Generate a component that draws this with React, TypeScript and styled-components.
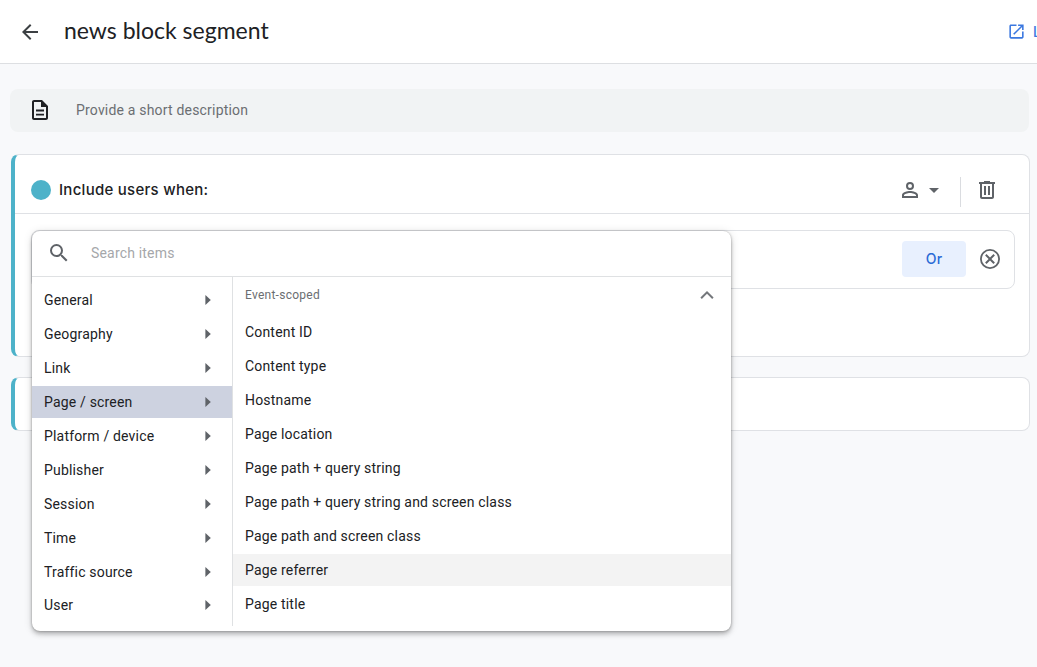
import React from "react";
import styled, { createGlobalStyle } from "styled-components";

const GlobalStyle = createGlobalStyle`
  * { box-sizing: border-box; }
  html, body { margin: 0; height: 100%; overflow: hidden; }
  body {
    background: #f8f9fb;
    color: #202124;
    font-family: Roboto, "Liberation Sans", sans-serif;
  }
`;

const Page = styled.div`
  position: relative;
  width: 1037px;
  height: 667px;
  overflow: hidden;
`;

const Header = styled.header`
  display: flex;
  align-items: center;
  height: 64px;
  padding: 0 0 0 18px;
  background: #fff;
  border-bottom: 1px solid #dddfe2;
`;

const Title = styled.h1`
  margin: 0 0 3px 22px;
  flex: 1;
  font: 400 23px/30px Lato, sans-serif;
  white-space: nowrap;
`;

const HeaderLink = styled.a`
  display: flex;
  align-items: center;
  gap: 7px;
  width: 30px;
  overflow: hidden;
  color: #3b78e0;
  font: 500 14px/20px Inter, sans-serif;
  white-space: nowrap;
  svg { flex: none; }
`;

const Content = styled.main`
  display: flex;
  flex-direction: column;
  padding: 25px 7px 0 11px;
`;

const Description = styled.div`
  display: flex;
  align-items: center;
  height: 43px;
  margin: 0 1px 22px -1px;
  padding: 0 0 1px 18px;
  gap: 24px;
  border-radius: 8px;
  background: #f1f3f4;
  color: #6b6e72;
  font-size: 14px;
  letter-spacing: 0.19px;
`;

const Card = styled.section<{ $height: number }>`
  height: ${(p) => p.$height}px;
  margin-bottom: 20px;
  border: 1px solid #dfe1e5;
  border-left: 4px solid #4db2c9;
  border-radius: 8px;
  background: #fff;
`;

const CardHeader = styled.div`
  display: flex;
  align-items: center;
  height: 59px;
  padding: 11px 30px 0 16px;
  border-bottom: 1px solid #dfe1e5;
`;

const Dot = styled.span`
  width: 20px;
  height: 20px;
  border-radius: 50%;
  background: #4db2c9;
`;

const CardTitle = styled.h2`
  flex: 1;
  margin: 0 0 0 8px;
  font: 500 15px/24px Inter, sans-serif;
  letter-spacing: 0.27px;
`;

const Divider = styled.span`
  width: 1px;
  height: 30px;
  margin: 4px 14px 0 14px;
  background: #dadce0;
`;

const Condition = styled.div`
  display: flex;
  align-items: center;
  justify-content: flex-end;
  height: 59px;
  margin: 16px 14px 0 16px;
  padding: 0 12px 1px 0;
  gap: 12px;
  border: 1px solid #dfe1e5;
  border-radius: 8px;
`;

const OrButton = styled.button`
  width: 64px;
  height: 36px;
  padding: 0;
  border: 0;
  border-radius: 4px;
  background: #e8f0fe;
  color: #2b6bd6;
  font: 500 14px/36px Inter, sans-serif;
  letter-spacing: 0.3px;
`;

const Picker = styled.div`
  position: absolute;
  left: 32px;
  top: 231px;
  width: 699px;
  height: 400px;
  display: flex;
  flex-direction: column;
  overflow: hidden;
  border-radius: 8px;
  background: #fff;
  box-shadow: 0 2px 4px -1px rgba(0, 0, 0, 0.22), 0 4px 5px rgba(0, 0, 0, 0.13),
    0 1px 10px rgba(0, 0, 0, 0.12), 0 0 2px rgba(0, 0, 0, 0.25);
`;

const Search = styled.div`
  display: flex;
  align-items: center;
  height: 46px;
  padding: 0 0 1px 15px;
  gap: 20px;
  border-bottom: 1px solid #dfe1e3;
  color: #a5a7aa;
  font-size: 14px;
  letter-spacing: 0.18px;
`;

const Columns = styled.div`
  display: flex;
  height: 349px;
`;

const Categories = styled.nav`
  width: 201px;
  padding-top: 7px;
  border-right: 1px solid #dfe1e3;
`;

const Items = styled.div`
  flex: 1;
`;

const Group = styled.div`
  display: flex;
  align-items: center;
  justify-content: space-between;
  height: 39px;
  padding: 0 12px 4px;
  color: #6b6e72;
  font-size: 12px;
  letter-spacing: 0.26px;
`;

const Row = styled.div<{ $bg?: string }>`
  display: flex;
  align-items: center;
  justify-content: space-between;
  height: 32px;
  margin-bottom: 1.94px;
  padding: 0 12px;
  background: ${(p) => p.$bg ?? "transparent"};
  font-size: 14px;
  letter-spacing: 0.18px;
  white-space: nowrap;
`;

const Icon = ({ d, size = 24, color = "#5f6368" }: { d: string; size?: number; color?: string }) => (
  <svg width={size} height={size} viewBox="0 0 24 24" fill={color}>
    <path d={d} fillRule="evenodd" />
  </svg>
);

const icons = {
  back: "M20 11H7.83l5.59-5.59L12 4l-8 8 8 8 1.41-1.41L7.83 13H20v-2z",
  launch: "M19 19H5V5h7V3H5c-1.11 0-2 .9-2 2v14c0 1.1.89 2 2 2h14c1.1 0 2-.9 2-2v-7h-2v7zM14 3v2h3.59l-9.83 9.83 1.41 1.41L19 6.41V10h2V3h-7z",
  doc: "M14 2H6c-1.1 0-2 .9-2 2v16c0 1.1.9 2 2 2h12c1.1 0 2-.9 2-2V8l-6-6zM6 20V4h7v5h5v11H6zM8 11.6h8v1.8H8zM8 15.8h8v1.8H8z",
  person: "M12 4a4 4 0 1 0 0 8 4 4 0 0 0 0-8zm0 2a2 2 0 1 1 0 4 2 2 0 0 1 0-4zm0 7c-2.67 0-8 1.34-8 4v3h16v-3c0-2.66-5.33-4-8-4zm6 5H6v-.99c.2-.72 3.3-2.01 6-2.01s5.8 1.29 6 2v1z",
  down: "M7 10l5 5 5-5z",
  trash: "M15 4V3H9v1H4v2h1v13c0 1.1.9 2 2 2h10c1.1 0 2-.9 2-2V6h1V4h-5zm2 15H7V6h10v13zM9 8h2v9H9zm4 0h2v9h-2z",
  cancel: "M12 2a10 10 0 1 0 0 20 10 10 0 0 0 0-20zm0 18.2a8.2 8.2 0 1 1 0-16.4 8.2 8.2 0 0 1 0 16.4zM15.5 7.1L12 10.6 8.5 7.1 7.1 8.5l3.5 3.5-3.5 3.5 1.4 1.4 3.5-3.5 3.5 3.5 1.4-1.4-3.5-3.5 3.5-3.5z",
  search: "M15.5 14h-.79l-.28-.27A6.471 6.471 0 0 0 16 9.5 6.5 6.5 0 1 0 9.5 16c1.61 0 3.09-.59 4.23-1.57l.27.28v.79l5 4.99L20.49 19l-4.99-5zm-6 0C7.01 14 5 11.99 5 9.5S7.01 5 9.5 5 14 7.01 14 9.5 11.99 14 9.5 14z",
  up: "M12 8l-6.6 6.6 1.41 1.41L12 10.83l5.19 5.18 1.41-1.41z",
  right: "M9.4 7v10l5.4-5z",
};

const categories = [
  "General", "Geography", "Link", "Page / screen", "Platform / device",
  "Publisher", "Session", "Time", "Traffic source", "User",
];

const dimensions = [
  "Content ID", "Content type", "Hostname", "Page location", "Page path + query string",
  "Page path + query string and screen class", "Page path and screen class",
  "Page referrer", "Page title",
];

export default function App() {
  return (
    <Page>
      <GlobalStyle />
      <Header>
        <Icon d={icons.back} color="#3c4043" />
        <Title>news block segment</Title>
        <HeaderLink>
          <Icon d={icons.launch} size={19} color="#3b78e0" />
          <span>Learn more</span>
        </HeaderLink>
      </Header>
      <Content>
        <Description>
          <Icon d={icons.doc} color="#202124" />
          <span>Provide a short description</span>
        </Description>
        <Card $height={203}>
          <CardHeader>
            <Dot />
            <CardTitle>Include users when:</CardTitle>
            <Icon d={icons.person} />
            <Icon d={icons.down} />
            <Divider />
            <Icon d={icons.trash} />
          </CardHeader>
          <Condition>
            <OrButton>Or</OrButton>
            <Icon d={icons.cancel} />
          </Condition>
        </Card>
        <Card $height={54} />
      </Content>
      <Picker>
        <Search>
          <Icon d={icons.search} />
          <span>Search items</span>
        </Search>
        <Columns>
          <Categories>
            {categories.map((name) => (
              <Row key={name} $bg={name === "Page / screen" ? "#cdd2e0" : undefined}>
                {name}
                <Icon d={icons.right} />
              </Row>
            ))}
          </Categories>
          <Items>
            <Group>
              Event-scoped
              <Icon d={icons.up} color="#74777b" />
            </Group>
            {dimensions.map((name) => (
              <Row key={name} $bg={name === "Page referrer" ? "#f3f3f3" : undefined}>
                {name}
              </Row>
            ))}
          </Items>
        </Columns>
      </Picker>
    </Page>
  );
}
